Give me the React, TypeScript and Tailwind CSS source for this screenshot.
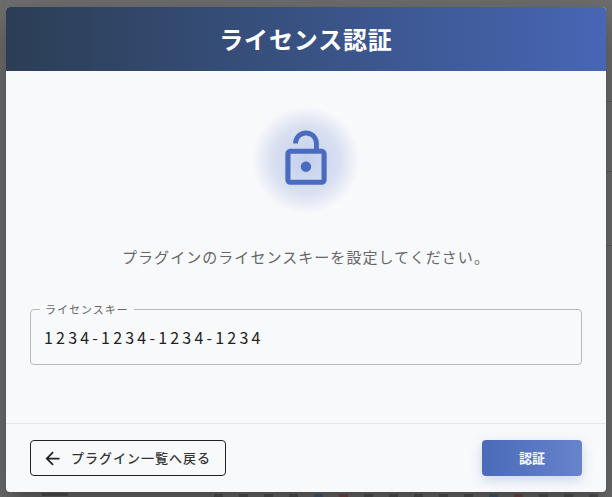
const font = "font-['Noto_Sans_CJK_JP','Noto_Sans',sans-serif]";

// ダイアログの後ろに少しだけ見えている一覧の行アイコン
const peekMarks = [
  "bg-[#565656]", "bg-[#565656]", "bg-[#565656]", "bg-[#565656]", "bg-[#4a6078]", "bg-[#7c4a4a]", "bg-[#565656]",
  "bg-[#565656]", "bg-[#565656]", "bg-[#565656]", "bg-[#565656]", "bg-[#4a6078]", "bg-[#7c4a4a]", "bg-[#565656]",
  "bg-[#565656]", "bg-[#565656]",
];

export default function App() {
  return (
    <main className={`relative h-[497px] w-[612px] overflow-hidden bg-[#6f6f6f] pt-[7px] ${font}`}>
      {/* 背景の表の罫線 */}
      <div className="absolute right-0 top-[101px] h-px w-[6px] bg-[#5c5c5c]" />
      <div className="absolute right-0 top-[171px] h-px w-[6px] bg-[#5c5c5c]" />
      <div className="absolute right-0 top-[245px] h-px w-[6px] bg-[#5c5c5c]" />
      <div className="absolute bottom-[1px] left-[42px] h-[3px] w-[26px] bg-[#565656]" />
      <div className="absolute bottom-0 left-[214px] flex gap-[16px]">
        {peekMarks.map((color, i) => (
          <span key={i} className={`h-[3px] w-[9px] ${color}`} />
        ))}
      </div>

      <div className="relative mx-auto flex h-[485px] w-[600px] flex-col overflow-hidden rounded-[4px] bg-[#f8f9fb] shadow-[0_11px_15px_-7px_rgba(0,0,0,0.2),0_24px_38px_3px_rgba(0,0,0,0.14),0_9px_46px_8px_rgba(0,0,0,0.12)]">
        <header className="flex h-[64px] shrink-0 items-center justify-center bg-gradient-to-r from-[#2c3e55] to-[#4766b5]">
          <h1 className="text-[24px] font-bold leading-none tracking-[0.85px] text-white">ライセンス認証</h1>
        </header>

        <section className="flex flex-1 flex-col items-center px-6 pt-[36px]">
          <div className="flex h-[106px] w-[106px] items-center justify-center rounded-full bg-[radial-gradient(circle,#c3cfea_0%,#d9e0f1_45%,#f8f9fb_72%)]">
            <svg className="-mt-[2px]" width="62" height="62" viewBox="0 0 24 24" fill="#4a6bc0">
              <path d="M12 17c1.1 0 2-.9 2-2s-.9-2-2-2-2 .9-2 2 .9 2 2 2zm6-9h-1V6c0-2.76-2.24-5-5-5S7 3.24 7 6h1.9c0-1.71 1.39-3.1 3.1-3.1 1.71 0 3.1 1.39 3.1 3.1v2H6c-1.1 0-2 .9-2 2v10c0 1.1.9 2 2 2h12c1.1 0 2-.9 2-2V10c0-1.1-.9-2-2-2zm0 12H6V10h12v10z" />
            </svg>
          </div>

          <p className="mt-[32px] text-[15px] leading-[24px] tracking-[1.05px] text-[#666]">プラグインのライセンスキーを設定してください。</p>

          <div className="relative mt-[40px] flex h-[56px] w-[552px] items-center rounded border border-[#b8b8b8] px-[13px]">
            <span className="absolute -top-[8px] left-[9px] bg-[#f8f9fb] px-[5px] text-[11px] leading-[14px] tracking-[1px] text-[#666]">ライセンスキー</span>
            <span className="text-[16px] tracking-[3.2px] text-[#222]">1234-1234-1234-1234</span>
          </div>
        </section>

        <footer className="flex h-[69px] shrink-0 items-center justify-between border-t border-[#e4e5e8] px-6">
          <button className="flex h-[36px] w-[196px] items-center gap-[8px] rounded border border-[#222] pl-[11px] text-[13px] font-medium tracking-[1px] text-[#333]">
            <svg width="21" height="21" viewBox="0 0 24 24" fill="#222">
              <path d="M20 11H7.83l5.59-5.59L12 4l-8 8 8 8 1.41-1.41L7.83 13H20v-2z" />
            </svg>
            プラグイン一覧へ戻る
          </button>
          <button className="h-[36px] w-[100px] rounded bg-gradient-to-r from-[#4a6bb9] to-[#6784cb] text-[13px] font-bold text-white shadow-[0_4px_12px_rgba(74,107,185,0.25)]">
            認証
          </button>
        </footer>
      </div>
    </main>
  );
}
